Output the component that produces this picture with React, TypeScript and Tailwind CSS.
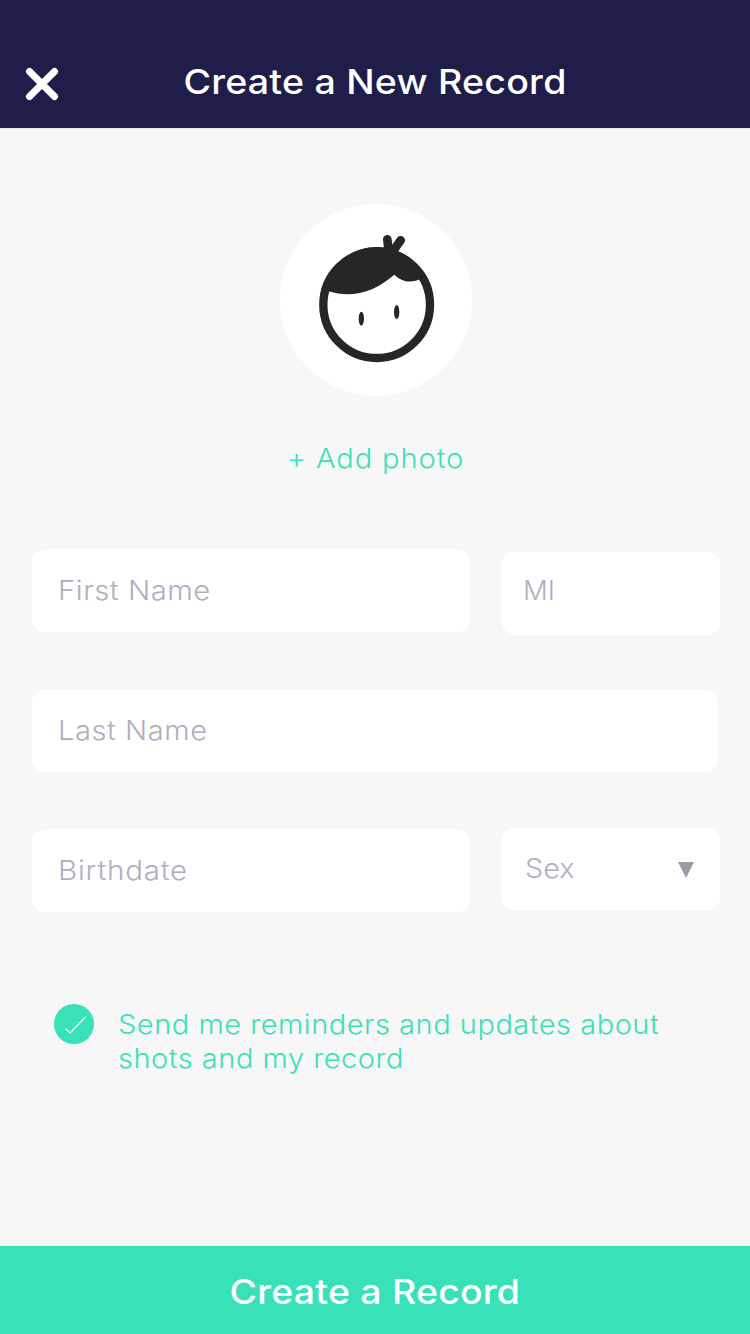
import type { ReactNode } from 'react';

function Avatar() {
  return (
    <svg viewBox="30 27 576 576" className="ml-0.5 h-48 w-48 rounded-full bg-white" aria-hidden="true">
      <g fill="#262626">
        <circle cx="320" cy="329" r="160" fill="none" stroke="#262626" strokeWidth="25" />
        <path d="M161 283 C187 204 250 156 320 156 C386 156 439 193 467 243 L449 253 C421 266 393 259 373 239 C310 293 246 310 176 289 Z" />
        <path d="M352 133 L356 170 M392 136 L368 170" fill="none" stroke="#262626" strokeWidth="26" strokeLinecap="round" />
        <ellipse cx="274" cy="371" rx="8" ry="21" />
        <ellipse cx="380" cy="351" rx="8" ry="21" />
      </g>
    </svg>
  );
}

function Field({ className, children }: { className: string; children: ReactNode }) {
  return (
    <div className={`flex h-[82px] shrink-0 items-center rounded-xl bg-white text-[27.5px] font-light whitespace-nowrap text-[#b0aec0] ${className}`}>
      {children}
    </div>
  );
}

export default function App() {
  return (
    <div className="flex h-[1334px] w-[750px] flex-col overflow-hidden bg-[#f7f7f7] font-['Inter','Liberation_Sans',sans-serif]">
      <header className="grid h-32 grid-cols-[84px_1fr_84px] items-center bg-[#1f1d4a] pt-9 shadow-[0_1px_0_#ebebed]">
        <svg viewBox="0 0 34 34" className="mt-1 ml-[25px] h-[34px] w-[34px]" fill="none" stroke="white" strokeWidth="7" strokeLinecap="round">
          <path d="M4.5 4.5 L29.5 29.5 M29.5 4.5 L4.5 29.5" />
        </svg>
        <h1 className="scale-x-[1.088] text-center text-[34.5px] leading-[44px] font-medium tracking-[0.2px] whitespace-nowrap text-white">Create a New Record</h1>
      </header>

      <main className="flex flex-1 flex-col pt-[76px]">
        <div className="flex flex-col items-center">
          <Avatar />
          <button className="mt-[42px] ml-[2px] scale-x-[1.06] text-[27.5px] leading-10 font-light tracking-[0.8px] text-[#39e1b9]">+ Add photo</button>
        </div>

        <form className="mt-[72px] flex flex-col pl-8">
          <div className="flex items-start gap-8">
            <Field className="w-[438px] pl-[26px]">
              <span className="origin-left scale-x-[1.065] tracking-[0.5px]">First Name</span>
            </Field>
            <Field className="mt-0.5 w-[218px] pb-1 pl-[21px]">MI</Field>
          </div>
          <Field className="mt-14 w-[686px] pl-[26px]">
            <span className="origin-left scale-x-[1.06] tracking-[0.5px]">Last Name</span>
          </Field>
          <div className="mt-14 flex items-end gap-8">
            <Field className="w-[438px] pl-[26px]">
              <span className="origin-left scale-x-[1.075] tracking-[0.7px]">Birthdate</span>
            </Field>
            <Field className="mb-0.5 w-[218px] justify-between pr-[26px] pl-[23px]">
              <span className="origin-left scale-x-[1.05]">Sex</span>
              <svg viewBox="0 0 16 16" className="mt-0.5 h-4 w-4" fill="#9c9aa8"><path d="M0 0 H16 L8 16 Z" /></svg>
            </Field>
          </div>
        </form>

        <div className="mt-[92px] flex items-start pl-[54px]">
          <svg viewBox="0 0 40 40" className="h-10 w-10 rounded-full bg-[#39e1b9]" fill="none" stroke="white" strokeWidth="1.2">
            <path d="M11.5 24.5 L16 29 L31.5 13" />
          </svg>
          <p className="mt-[3px] ml-6 origin-left scale-x-[1.054] text-[27.5px] leading-[34px] font-light tracking-[0.5px] whitespace-nowrap text-[#39e1b9]">
            Send me reminders and updates about<br />shots and my record
          </p>
        </div>
      </main>

      <button className="h-[88px] bg-[#39e1b9] pt-1 text-[34.5px] font-medium text-white">
        <span className="inline-block scale-x-[1.085] tracking-[0.2px]">Create a Record</span>
      </button>
    </div>
  );
}
